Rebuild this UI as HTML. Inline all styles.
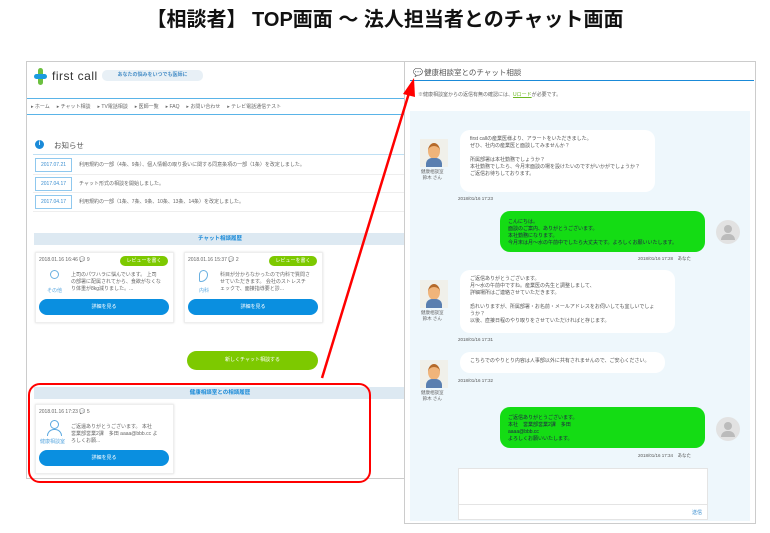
<!DOCTYPE html>
<html><head><meta charset="utf-8"><style>
*{margin:0;padding:0;box-sizing:border-box}
body{width:770px;height:533px;background:#fff;font-family:"Liberation Sans","Noto Sans CJK JP",sans-serif;position:relative;overflow:hidden;color:#555}
.a{position:absolute}
.t{font-size:5px;color:#666;white-space:nowrap}
.card{position:absolute;background:#fff;border:1px solid #eee;box-shadow:0 0 2px #ddd}
.bb{position:absolute;background:#0a8fe0;border-radius:9px;color:#fff;font-size:5px;text-align:center;line-height:16px}
.gb{position:absolute;background:#7dc900;border-radius:6px;color:#fff;font-size:5px;text-align:center;line-height:10px}
.sh{position:absolute;background:#dde9f2;color:#1a8ad8;font-size:5.5px;font-weight:bold;text-align:center;line-height:12px}
.nd{position:absolute;border:1px solid #8fc8ee;color:#3a8ed0;font-size:5px;text-align:center;line-height:12px;width:37px;height:14px;left:35px}
.bw{position:absolute;background:#fff;border-radius:10px;font-size:5px;color:#555;line-height:7px;padding:6px 10px}
.bg{position:absolute;background:#14dc14;border-radius:10px;font-size:5px;color:#224;line-height:7px;padding:8px 8px}
.av{position:absolute;width:28px;height:28px;background:#f0f0ea}
.av:before{content:"";position:absolute;left:8px;top:4px;width:12px;height:13px;border-radius:50%;background:#f0b47a;border-top:3px solid #b56a2a}
.av:after{content:"";position:absolute;left:6px;top:19px;width:16px;height:9px;background:#5a7fb0;border-radius:6px 6px 0 0}
.gc{position:absolute;width:24px;height:24px;border-radius:50%;background:#e2e2e2}
.gc:before{content:"";position:absolute;left:8px;top:5px;width:8px;height:8px;border-radius:50%;background:#bbb}
.gc:after{content:"";position:absolute;left:5px;top:14px;width:14px;height:6px;border-radius:6px 6px 0 0;background:#bbb}
.ts{position:absolute;font-size:4.5px;color:#555}
</style></head><body>
<div class="a" style="left:0;top:3px;width:770px;text-align:center;font-size:20px;font-weight:bold;color:#111">【相談者】 TOP画面 〜 法人担当者とのチャット画面</div>

<div class="a" style="left:26px;top:61px;width:380px;height:418px;border:1px solid #ccc;background:#fff"></div>
<div class="a" style="left:34px;top:68px;width:13px;height:17px">
<div class="a" style="left:4px;top:0;width:5px;height:17px;background:#6cc040;border-radius:3px"></div>
<div class="a" style="left:0;top:6px;width:13px;height:5px;background:#1a9be0;border-radius:3px"></div></div>
<div class="a" style="left:52px;top:69px;font-size:12px;color:#333;letter-spacing:.5px">first call</div>
<div class="a" style="left:102px;top:70px;width:101px;height:11px;background:#e8f0f6;border-radius:5px;font-size:5px;color:#4a90c8;text-align:center;line-height:11px;font-weight:bold">あなたの悩みをいつでも医師に</div>
<div class="a" style="left:27px;top:98px;width:379px;height:17px;border-top:1px solid #5ab4e8;border-bottom:1px solid #5ab4e8"></div>
<div class="a t" style="left:31px;top:103px">▸ ホーム &nbsp;&nbsp;&nbsp;&nbsp;▸ チャット相談 &nbsp;&nbsp;&nbsp;&nbsp;▸ TV電話相談 &nbsp;&nbsp;&nbsp;&nbsp;▸ 医師一覧 &nbsp;&nbsp;&nbsp;&nbsp;▸ FAQ &nbsp;&nbsp;&nbsp;&nbsp;▸ お問い合わせ &nbsp;&nbsp;&nbsp;&nbsp;▸ テレビ電話通信テスト</div>
<div class="a" style="left:35px;top:140px;width:9px;height:9px;border-radius:50%;background:#1a8ad8;color:#fff;font-size:6px;text-align:center;line-height:9px;font-weight:bold">i</div>
<div class="a" style="left:54px;top:140px;font-size:7.5px;color:#555">お知らせ</div>
<div class="a" style="left:33px;top:154px;width:373px;border-top:1px solid #bfe0f4"></div>
<div class="nd" style="top:158px">2017.07.21</div><div class="a t" style="left:79px;top:161px">利用規約の一部（4条、9条）、個人情報の取り扱いに関する同意条項の一部（1条）を改定しました。</div>
<div class="a" style="left:33px;top:174px;width:373px;border-top:1px solid #eee"></div>
<div class="nd" style="top:177px">2017.04.17</div><div class="a t" style="left:79px;top:180px">チャット形式の相談を開始しました。</div>
<div class="a" style="left:33px;top:192px;width:373px;border-top:1px solid #eee"></div>
<div class="nd" style="top:195px">2017.04.17</div><div class="a t" style="left:79px;top:198px">利用規約の一部（1条、7条、9条、10条、13条、14条）を改定しました。</div>
<div class="a" style="left:33px;top:211px;width:373px;border-top:1px solid #eee"></div>

<div class="sh" style="left:34px;top:233px;width:372px">チャット相談履歴</div>
<div class="card" style="left:35px;top:252px;width:139px;height:71px"></div>
<div class="a t" style="left:39px;top:257px">2018.01.16 16:46 💬 9</div>
<div class="gb" style="left:120px;top:256px;width:48px">レビューを書く</div>
<div class="a" style="left:50px;top:270px;width:9px;height:9px;border:1.5px solid #6ab0e0;border-radius:50%"></div>
<div class="a t" style="left:47px;top:287px;color:#5aa8e0">その他</div>
<div class="a t" style="left:71px;top:272px;line-height:7px">上司のパワハラに悩んでいます。 上司<br>の部署に配属されてから、食欲がなくな<br>り体重が8kg減りました。...</div>
<div class="bb" style="left:39px;top:299px;width:130px">詳細を見る</div>

<div class="card" style="left:184px;top:252px;width:139px;height:71px"></div>
<div class="a t" style="left:188px;top:257px">2018.01.16 15:37 💬 2</div>
<div class="gb" style="left:269px;top:256px;width:48px">レビューを書く</div>
<div class="a" style="left:199px;top:270px;width:9px;height:12px;border:1.5px solid #6ab0e0;border-radius:5px 5px 8px 2px"></div>
<div class="a t" style="left:199px;top:287px;color:#5aa8e0">内科</div>
<div class="a t" style="left:220px;top:272px;line-height:7px">科目が分からなかったので内科で質問さ<br>せていただきます。 会社のストレスチ<br>ェックで、面接指導要と診...</div>
<div class="bb" style="left:188px;top:299px;width:130px">詳細を見る</div>

<div class="gb" style="left:187px;top:351px;width:131px;height:19px;line-height:19px;border-radius:10px">新しくチャット相談する</div>

<div class="sh" style="left:34px;top:387px;width:372px">健康相談室との相談履歴</div>
<div class="card" style="left:35px;top:404px;width:139px;height:70px"></div>
<div class="a t" style="left:39px;top:409px">2018.01.16 17:23 💬 5</div>
<div class="a" style="left:50px;top:420px;width:9px;height:9px;border:1.5px solid #5aa8e0;border-radius:50%"></div>
<div class="a" style="left:47px;top:429px;width:15px;height:7px;border:1.5px solid #5aa8e0;border-bottom:none;border-radius:7px 7px 0 0"></div>
<div class="a t" style="left:40px;top:438px;color:#5aa8e0">健康相談室</div>
<div class="a t" style="left:71px;top:424px;line-height:7px">ご返還ありがとうございます。 本社<br>営業部営業2課　多田 aaaa@bbb.cc よ<br>ろしくお願...</div>
<div class="bb" style="left:39px;top:450px;width:130px">詳細を見る</div>

<div class="a" style="left:28px;top:383px;width:343px;height:100px;border:2.5px solid #f00;border-radius:12px"></div>

<div class="a" style="left:404px;top:61px;width:352px;height:463px;border:1px solid #ccc;background:#fff"></div>
<div class="a" style="left:413px;top:68px;font-size:8px;color:#1a8ad8">💬</div>
<div class="a" style="left:424px;top:67px;font-size:7.5px;color:#555">健康相談室とのチャット相談</div>
<div class="a" style="left:410px;top:80px;width:344px;border-top:1px solid #1a8ad8"></div>
<div class="a t" style="left:418px;top:91px">※健康相談室からの返信有無の確認には、<span style="color:#6cb820;text-decoration:underline">Uロード</span>が必要です。</div>
<div class="a" style="left:410px;top:111px;width:340px;height:410px;background:#eef7fc"></div>

<div class="av" style="left:420px;top:139px"></div>
<div class="a t" style="left:421px;top:169px;font-size:4.5px;line-height:6px;text-align:center">健康相談室<br>鈴木 さん</div>
<div class="bw" style="left:460px;top:130px;width:195px;height:62px">first callの産業医様より、アラートをいただきました。<br>ぜひ、社内の産業医と面談してみませんか？<br><br>所属部署は本社勤務でしょうか？<br>本社勤務でしたら、今月末面談の場を設けたいのですがいかがでしょうか？<br>ご返信お待ちしております。</div>
<div class="ts" style="left:458px;top:196px">2018/01/16 17:23</div>

<div class="bg" style="left:500px;top:211px;width:205px;height:41px">こんにちは。<br>面談のご案内、ありがとうございます。<br>本社勤務になります。<br>今月末は月～水の午前中でしたら大丈夫です。よろしくお願いいたします。</div>
<div class="gc" style="left:716px;top:220px"></div>
<div class="ts" style="left:638px;top:256px">2018/01/16 17:28　あなた</div>

<div class="av" style="left:420px;top:280px"></div>
<div class="a t" style="left:421px;top:310px;font-size:4.5px;line-height:6px;text-align:center">健康相談室<br>鈴木 さん</div>
<div class="bw" style="left:460px;top:270px;width:215px;height:63px">ご返信ありがとうございます。<br>月～水の午前中ですね。産業医の先生と調整しまして、<br>詳細場所はご連絡させていただきます。<br><br>恐れいりますが、所属部署・お名前・メールアドレスをお伺いしても宜しいでしょ<br>うか？<br>以後、直接日程のやり取りをさせていただければと存じます。</div>
<div class="ts" style="left:458px;top:337px">2018/01/16 17:31</div>

<div class="av" style="left:420px;top:360px"></div>
<div class="a t" style="left:421px;top:390px;font-size:4.5px;line-height:6px;text-align:center">健康相談室<br>鈴木 さん</div>
<div class="bw" style="left:460px;top:352px;width:205px;height:21px">こちらでのやりとり内容は人事部以外に共有されませんので、ご安心ください。</div>
<div class="ts" style="left:458px;top:378px">2018/01/16 17:32</div>

<div class="bg" style="left:500px;top:407px;width:205px;height:41px">ご返信ありがとうございます。<br>本社　営業部営業2課　多田<br>aaaa@bbb.cc<br>よろしくお願いいたします。</div>
<div class="gc" style="left:716px;top:417px"></div>
<div class="ts" style="left:638px;top:453px">2018/01/16 17:34　あなた</div>

<div class="a" style="left:458px;top:468px;width:250px;height:52px;background:#fff;border:1px solid #e4e4e4"></div>
<div class="a" style="left:458px;top:504px;width:250px;border-top:1px solid #e4e4e4"></div>
<div class="a t" style="left:692px;top:509px;color:#3a8ed0">送信</div>

<svg class="a" style="left:0;top:0" width="770" height="533"><line x1="322" y1="378" x2="409" y2="93" stroke="#f00" stroke-width="2.5"/><polygon points="414,78 403,94 415,97" fill="#f00"/></svg>
</body></html>
